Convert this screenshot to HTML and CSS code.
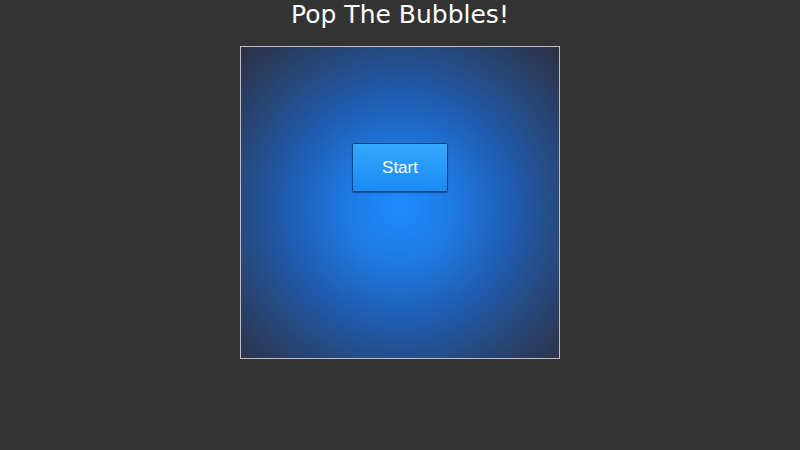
FILE: index.html
```html
<!DOCTYPE html>
<html lang="en">
<head>
    <meta charset="UTF-8">
    <title>Pop The Bubbles!</title>
    <link rel="stylesheet" href="styles.css">
</head>
<body>
    <h1 class="title">Pop The Bubbles!</h1>
    <div class="board">
        <button class="start-button">Start</button>
    </div>
</body>
</html>
```

FILE: styles.css
```css
body {
    background-color: #333;
    margin: 0;
    font-family: 'DejaVu Sans', sans-serif;
    color: #fff;
    display: flex;
    flex-direction: column;
    align-items: center;
}
.title {
    font-size: 25px;
    font-weight: normal;
    line-height: 30px;
    margin: 0 0 16px 0;
}
.board {
    width: 318px;
    height: 311px;
    border: 1px solid #c4bcc4;
    background: radial-gradient(circle at 50% 52%, #1e8cff 0%, #1f78e0 25%, #1f5cb0 50%, #264a80 70%, #2d3042 100%);
    display: flex;
    flex-direction: column;
    align-items: center;
}
.start-button {
    margin-top: 96px;
    width: 96px;
    height: 49px;
    border: 1px solid #14457a;
    border-radius: 2px;
    background: linear-gradient(#35a8ff, #1a8af5);
    box-shadow: 0 1px 1px rgba(0, 0, 0, 0.35);
    color: #fff;
    font-family: 'Liberation Sans', Arial, sans-serif;
    font-size: 17px;
    cursor: pointer;
}
```
